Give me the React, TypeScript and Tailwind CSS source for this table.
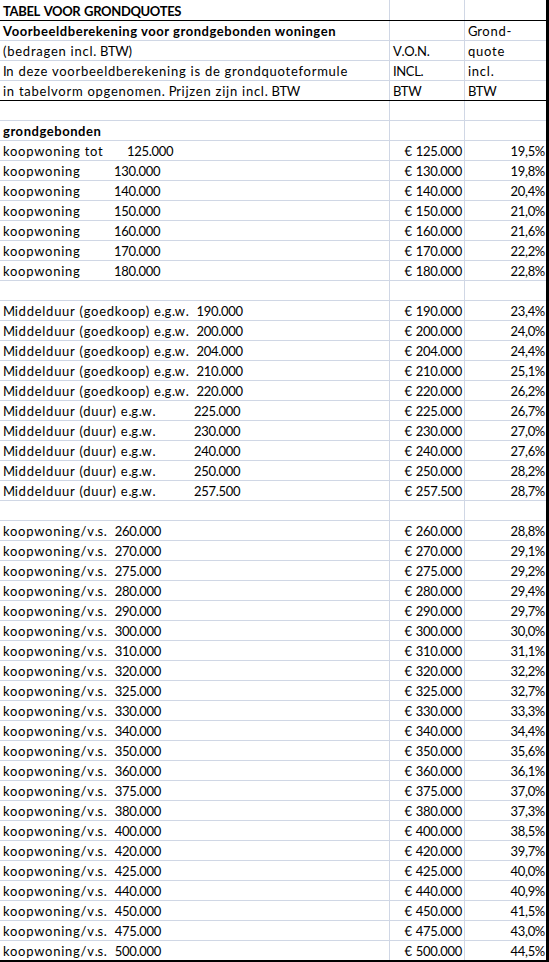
import React from 'react';

type Row = { label?: string; pre?: string; preW?: string; bold?: boolean; b?: string; c?: string; lineTop?: boolean; num?: boolean };

const koop: [string, string][] = [
  ['130.000', '19,8%'],
  ['140.000', '20,4%'],
  ['150.000', '21,0%'],
  ['160.000', '21,6%'],
  ['170.000', '22,2%'],
  ['180.000', '22,8%'],
];

const goedkoop: [string, string][] = [
  ['190.000', '23,4%'],
  ['200.000', '24,0%'],
  ['204.000', '24,4%'],
  ['210.000', '25,1%'],
  ['220.000', '26,2%'],
];

const duur: [string, string][] = [
  ['225.000', '26,7%'],
  ['230.000', '27,0%'],
  ['240.000', '27,6%'],
  ['250.000', '28,2%'],
  ['257.500', '28,7%'],
];

const vs: [string, string][] = [
  ['260.000', '28,8%'],
  ['270.000', '29,1%'],
  ['275.000', '29,2%'],
  ['280.000', '29,4%'],
  ['290.000', '29,7%'],
  ['300.000', '30,0%'],
  ['310.000', '31,1%'],
  ['320.000', '32,2%'],
  ['325.000', '32,7%'],
  ['330.000', '33,3%'],
  ['340.000', '34,4%'],
  ['350.000', '35,6%'],
  ['360.000', '36,1%'],
  ['375.000', '37,0%'],
  ['380.000', '37,3%'],
  ['400.000', '38,5%'],
  ['420.000', '39,7%'],
  ['425.000', '40,0%'],
  ['440.000', '40,9%'],
  ['450.000', '41,5%'],
  ['475.000', '43,0%'],
  ['500.000', '44,5%'],
];

const rows: Row[] = [
  { label: 'TABEL VOOR GRONDQUOTES', bold: true },
  { label: 'Voorbeeldberekening voor grondgebonden woningen', bold: true, c: 'Grond-', lineTop: true },
  { label: '(bedragen incl. BTW)', b: 'V.O.N.', c: 'quote' },
  { label: 'In deze voorbeeldberekening is de grondquoteformule', b: 'INCL.', c: 'incl.' },
  { label: 'in tabelvorm opgenomen. Prijzen zijn incl. BTW', b: 'BTW', c: 'BTW' },
  { lineTop: true },
  { label: 'grondgebonden', bold: true },
  { pre: 'koopwoning tot', preW: 'w-[124px]', label: '125.000', b: '€ 125.000', c: '19,5%', num: true },
  ...koop.map(([n, p]) => ({ pre: 'koopwoning', preW: 'w-[111px]', label: n, b: `€ ${n}`, c: p, num: true })),
  {},
  ...goedkoop.map(([n, p]) => ({ label: `Middelduur (goedkoop) e.g.w.  ${n}`, b: `€ ${n}`, c: p, num: true })),
  ...duur.map(([n, p]) => ({ pre: 'Middelduur (duur) e.g.w.', preW: 'w-[191px]', label: n, b: `€ ${n}`, c: p, num: true })),
  {},
  ...vs.map(([n, p]) => ({ label: `koopwoning/v.s.  ${n}`, b: `€ ${n}`, c: p, num: true })),
];

// Calibri-like widths: lowercase a bit wider, digits and caps a bit tighter
function Txt({ s, bold }: { s?: string; bold?: boolean }) {
  if (!s) return null;
  const parts = s.match(/[0-9.,%€]+|[A-Z]+|[^0-9.,%€A-Z]+/g) ?? [];
  return (
    <>
      {parts.map((p, i) => {
        const cls = /^[0-9.,%€]/.test(p)
          ? 'tracking-[-0.3px]'
          : /^[A-Z]/.test(p)
            ? 'tracking-[-0.35px]'
            : bold
              ? 'tracking-[0.55px]'
              : 'tracking-[0.75px]';
        return (
          <span key={i} className={cls}>
            {p}
          </span>
        );
      })}
    </>
  );
}

export default function App() {
  return (
    <div
      className="w-[549px] h-[962px] bg-white overflow-hidden text-black text-[13px]"
      style={{ fontFamily: 'Lato, "Liberation Sans", sans-serif' }}
    >
      <div className="border-r-[3px] border-b-[2px] border-black">
        {rows.map((r, i) => (
          <div
            key={i}
            className={`flex h-[20px] whitespace-pre ${i === 0 ? '' : r.lineTop ? 'border-t border-black' : 'border-t border-[#d0d7e5]'}`}
          >
            <div className={`w-[389px] flex items-end pl-[3px] pb-[2px] leading-none ${r.bold ? 'font-bold' : ''}`}>
              {r.pre && (
                <span className={`inline-block shrink-0 ${r.preW}`}>
                  <Txt s={r.pre} />
                </span>
              )}
              <span>
                <Txt s={r.label} bold={r.bold} />
              </span>
            </div>
            <div
              className={`w-[75px] flex items-end border-l border-[#d0d7e5] pb-[2px] leading-none ${r.num ? 'justify-end pr-[2px]' : 'pl-[3px]'}`}
            >
              <Txt s={r.b} />
            </div>
            <div
              className={`flex-1 flex items-end border-l border-[#d0d7e5] pb-[2px] leading-none ${r.num ? 'justify-end pr-[1px]' : 'pl-[3px]'}`}
            >
              <Txt s={r.c} />
            </div>
          </div>
        ))}
      </div>
    </div>
  );
}
